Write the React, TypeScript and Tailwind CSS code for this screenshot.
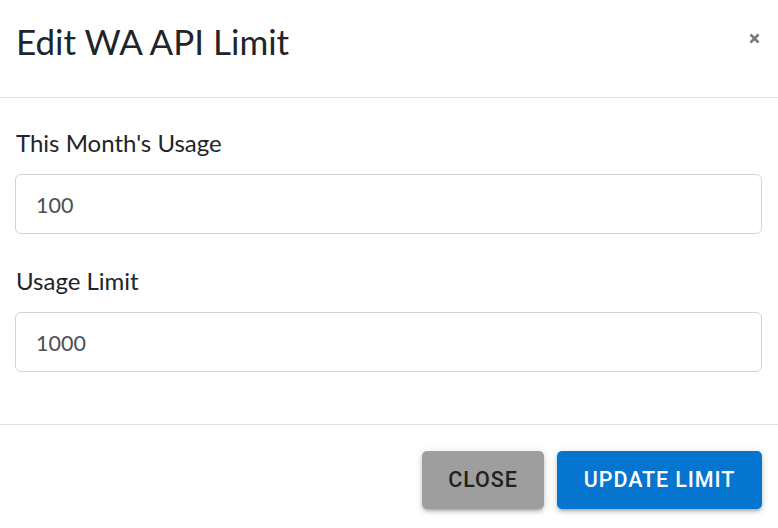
import React from "react";

export default function App() {
  return (
    <div className="w-[778px] h-[528px] bg-white overflow-hidden flex flex-col" style={{ fontFamily: "Lato, 'Noto Sans', sans-serif" }}>
      <div className="h-[98px] border-b border-[#dee2e6] flex items-center justify-between pl-4 pr-[18px]">
        <h1 className="text-[35px] leading-none text-[#212529] font-normal pb-[14px]">Edit WA API Limit</h1>
        <button className="w-[12px] h-[12px] flex items-center justify-center mb-[20px]" aria-label="close">
          <svg width="11" height="11" viewBox="0 0 11 11">
            <path d="M1.5 1.5 L9.5 9.5 M9.5 1.5 L1.5 9.5" stroke="#7a7a7a" strokeWidth="2.6" strokeLinecap="butt" />
          </svg>
        </button>
      </div>
      <div className="h-[327px] border-b border-[#dee2e6] px-[15px] pt-[27px] flex flex-col">
        <label className="block pl-[1px] text-[24px] leading-[36px] h-[36px] text-[#212529] mb-[13px]">This Month's Usage</label>
        <div className="h-[60px] w-[747px] border border-[#ced4da] rounded-[6px] flex items-center pl-5 pt-[3px] text-[21.5px] text-[#495057]">100</div>
        <label className="block pl-[1px] mt-[29px] text-[24px] leading-[36px] h-[36px] text-[#212529] mb-[13px]">Usage Limit</label>
        <div className="h-[60px] w-[747px] border border-[#ced4da] rounded-[6px] flex items-center pl-5 pt-[3px] text-[21.5px] text-[#495057]">1000</div>
      </div>
      <div className="flex justify-end gap-[13px] pt-[26px] pr-4" style={{ fontFamily: "Roboto, sans-serif" }}>
        <button className="w-[122px] h-[58px] rounded-[5px] bg-[#9e9e9e] text-[#212121] text-[21.5px] font-medium tracking-[0.9px] shadow-[0_3px_3px_-2px_rgba(0,0,0,0.2),0_3px_4px_0_rgba(0,0,0,0.14),0_1px_8px_0_rgba(0,0,0,0.12)]">CLOSE</button>
        <button className="w-[205px] h-[58px] rounded-[5px] bg-[#0575cf] text-white text-[21.5px] font-medium tracking-[0.9px] shadow-[0_3px_3px_-2px_rgba(0,0,0,0.2),0_3px_4px_0_rgba(0,0,0,0.14),0_1px_8px_0_rgba(0,0,0,0.12)]">UPDATE LIMIT</button>
      </div>
    </div>
  );
}
